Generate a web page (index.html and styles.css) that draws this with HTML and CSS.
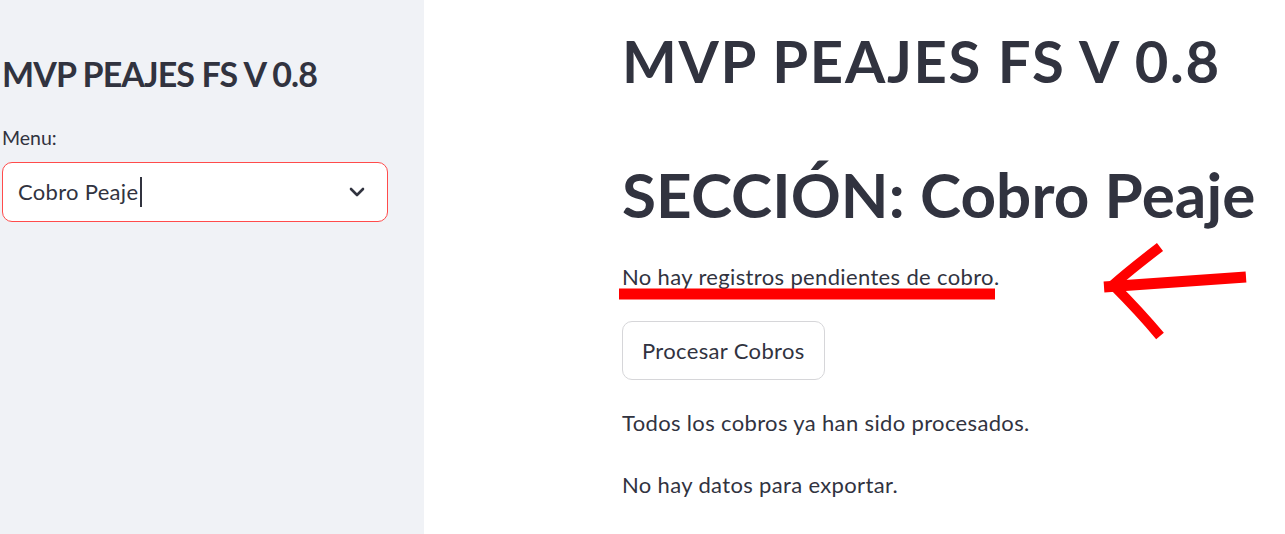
FILE: index.html
```html
<!DOCTYPE html>
<html lang="es">
<head>
<meta charset="utf-8">
<title>MVP PEAJES FS V 0.8</title>
<link rel="stylesheet" href="styles.css">
</head>
<body>
<div class="app">
  <aside class="sidebar">
    <h2 class="side-title">MVP PEAJES FS V 0.8</h2>
    <label class="field-label">Menu:</label>
    <div class="select">
      <span class="select-value">Cobro Peaje</span><span class="caret"></span>
      <svg class="chevron" width="16" height="10" viewBox="0 0 16 10"><path d="M2 2 L8 8 L14 2" fill="none" stroke="#31333f" stroke-width="2.6" stroke-linecap="round" stroke-linejoin="round"/></svg>
    </div>
  </aside>
  <main class="main">
    <h1 class="title t1">MVP PEAJES FS V 0.8</h1>
    <h1 class="title t2">SECCIÓN: Cobro Peaje</h1>
    <p class="text p1">No hay registros pendientes de cobro.</p>
    <button class="btn">Procesar Cobros</button>
    <p class="text p2">Todos los cobros ya han sido procesados.</p>
    <p class="text p3">No hay datos para exportar.</p>
  </main>
</div>
<svg class="annot" width="1285" height="534" viewBox="0 0 1285 534">
  <path d="M619 294 L995 294" stroke="#ff0000" stroke-width="11" fill="none"/>
  <path d="M1104 287 L1246 277" stroke="#ff0000" stroke-width="11" fill="none"/>
  <path d="M1160 247 Q1130 270 1113 285 Q1140 312 1160 336" stroke="#ff0000" stroke-width="10" fill="none"/>
</svg>
</body>
</html>
```
FILE: styles.css
```css
html, body {
  margin: 0;
  padding: 0;
}
body {
  width: 1285px;
  height: 534px;
  overflow: hidden;
  position: relative;
  font-family: Lato, "Noto Sans", sans-serif;
  color: #31333f;
  background: #ffffff;
}
.app {
  display: flex;
  height: 534px;
}
.sidebar {
  width: 424px;
  flex: none;
  background: #f0f2f6;
  box-sizing: border-box;
  padding: 52px 36px 0 2px;
  display: flex;
  flex-direction: column;
}
.side-title {
  margin: 0;
  font-size: 34px;
  line-height: 44px;
  font-weight: 700;
  letter-spacing: -0.9px;
}
.field-label {
  margin: 30px 0 0 0;
  font-size: 19.5px;
  line-height: 24px;
}
.select {
  margin-top: 12px;
  height: 60px;
  box-sizing: border-box;
  border: 1px solid #ff4b4b;
  border-radius: 10px;
  background: #ffffff;
  display: flex;
  align-items: center;
  padding: 0 22px 0 15px;
}
.select-value {
  font-size: 22px;
  line-height: 30px;
  letter-spacing: 0.3px;
}
.caret {
  width: 2px;
  height: 30px;
  background: #31333f;
  margin-left: 2px;
}
.chevron {
  margin-left: auto;
}
.main {
  flex: 1;
  padding-left: 198px;
  display: flex;
  flex-direction: column;
  align-items: flex-start;
}
.title {
  margin: 0;
  line-height: 70px;
  font-weight: 700;
}
.t1 {
  margin-top: 26px;
  font-size: 58px;
  letter-spacing: 1.7px;
}
.t2 {
  margin-top: 63px;
  font-size: 62px;
  letter-spacing: 0.1px;
}
.text {
  margin: 0;
  font-size: 22px;
  line-height: 34px;
  letter-spacing: 0.35px;
}
.p1 { margin-top: 31px; }
.btn {
  margin-top: 27px;
  height: 59px;
  padding: 0 19px;
  font-family: inherit;
  font-size: 22px;
  letter-spacing: 0.35px;
  color: #31333f;
  background: #ffffff;
  border: 1px solid #d6d6d9;
  border-radius: 10px;
}
.p2 { margin-top: 26px; }
.p3 { margin-top: 28px; }
.annot {
  position: absolute;
  left: 0;
  top: 0;
  pointer-events: none;
}
```
